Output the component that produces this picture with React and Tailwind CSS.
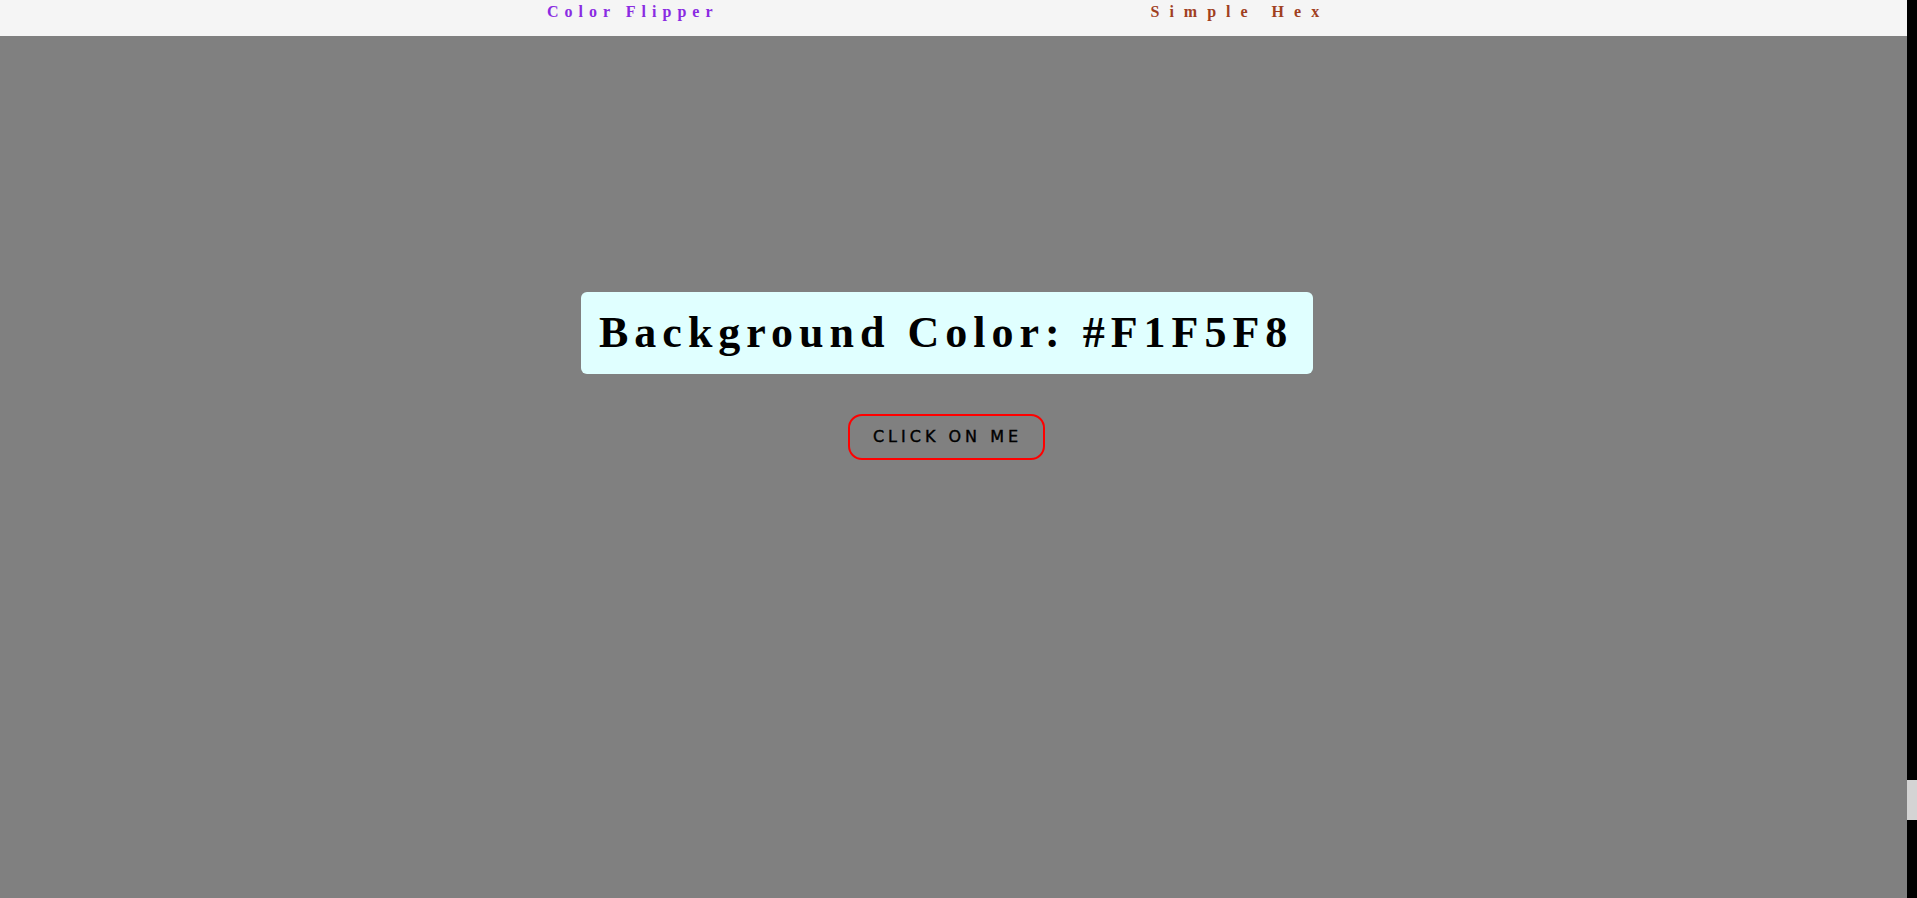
export default function App() {
  return (
    <div className="flex h-[898px] w-[1917px] overflow-hidden">
      <div className="flex flex-1 flex-col">
        <nav className="flex h-[36px] items-start bg-[#f5f5f5] pl-[547px] pt-0">
          <span className="text-[16px] leading-[24px] font-bold tracking-[6px] text-[#8a2be2] [font-family:'Liberation_Serif',serif]">Color Flipper</span>
          <span className="ml-[432px] text-[16px] leading-[24px] font-bold tracking-[10px] text-[#a0401f] [font-family:'Liberation_Serif',serif]">Simple Hex</span>
        </nav>
        <main className="flex flex-1 flex-col items-start bg-[#808080]">
          <div className="ml-[581px] mt-[256px] flex h-[82px] w-[732px] shrink-0 items-center rounded-[6px] bg-[#e0ffff] pl-[18px]">
            <h1 className="whitespace-nowrap text-[44px] font-bold tracking-[6px] text-black [font-family:'Liberation_Serif',serif]">Background Color: #F1F5F8</h1>
          </div>
          <button className="ml-[848px] mt-[40px] flex h-[46px] w-[197px] items-center justify-center rounded-[14px] border-2 border-[#ff0000] pl-[2px] text-[16px] font-normal tracking-[4px] text-black [-webkit-text-stroke:0.4px_black] [font-family:'DejaVu_Sans',sans-serif]">CLICK ON ME</button>
        </main>
      </div>
      <div className="flex w-[10px] flex-col bg-black">
        <div className="h-[780px]" />
        <div className="h-[40px] bg-[#d4d4d4]" />
      </div>
    </div>
  );
}
